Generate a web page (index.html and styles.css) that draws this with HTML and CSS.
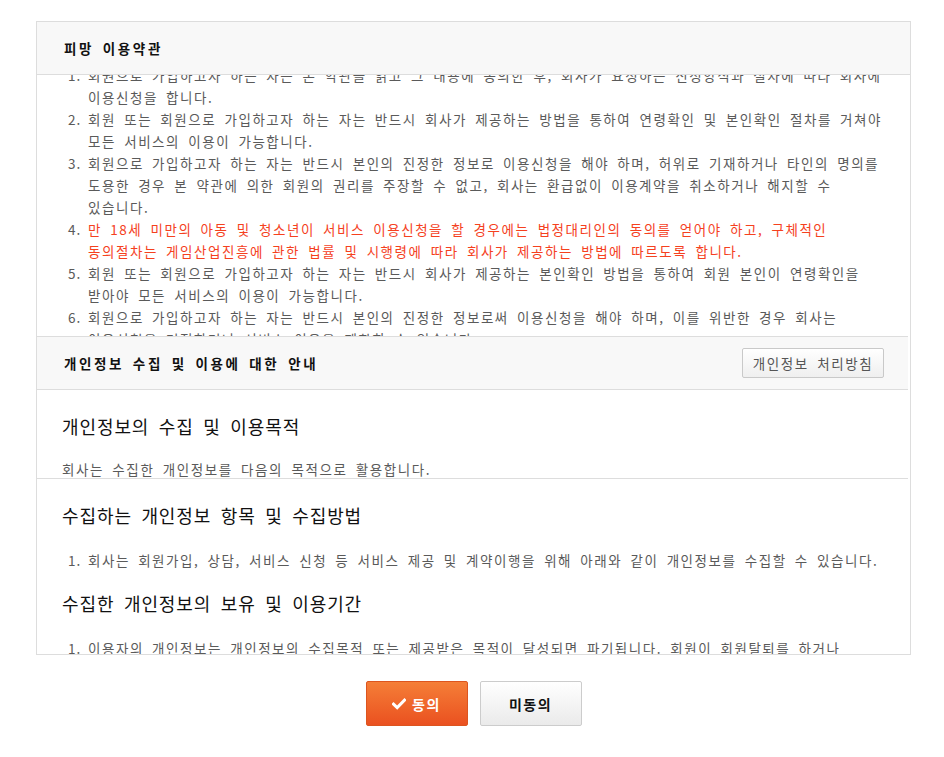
FILE: index.html
```html
<!DOCTYPE html>
<html lang="ko">
<head>
<meta charset="utf-8">
<title>피망 이용약관</title>
<link rel="stylesheet" href="styles.css">
</head>
<body>
<div class="page">
  <div class="terms">
    <div class="head">
      <h2 class="head-title">피망 이용약관</h2>
    </div>
    <div class="scroll-terms">
      <ol class="list list-terms">
        <li><span>회원으로 가입하고자 하는 자는 본 약관을 읽고 그 내용에 동의한 후, 회사가 요청하는 신청양식과 절차에 따라 회사에<br>이용신청을 합니다.</span></li>
        <li><span>회원 또는 회원으로 가입하고자 하는 자는 반드시 회사가 제공하는 방법을 통하여 연령확인 및 본인확인 절차를 거쳐야<br>모든 서비스의 이용이 가능합니다.</span></li>
        <li><span>회원으로 가입하고자 하는 자는 반드시 본인의 진정한 정보로 이용신청을 해야 하며, 허위로 기재하거나 타인의 명의를<br>도용한 경우 본 약관에 의한 회원의 권리를 주장할 수 없고, 회사는 환급없이 이용계약을 취소하거나 해지할 수<br>있습니다.</span></li>
        <li><span class="warn">만 18세 미만의 아동 및 청소년이 서비스 이용신청을 할 경우에는 법정대리인의 동의를 얻어야 하고, 구체적인<br>동의절차는 게임산업진흥에 관한 법률 및 시행령에 따라 회사가 제공하는 방법에 따르도록 합니다.</span></li>
        <li><span>회원 또는 회원으로 가입하고자 하는 자는 반드시 회사가 제공하는 본인확인 방법을 통하여 회원 본인이 연령확인을<br>받아야 모든 서비스의 이용이 가능합니다.</span></li>
        <li><span>회원으로 가입하고자 하는 자는 반드시 본인의 진정한 정보로써 이용신청을 해야 하며, 이를 위반한 경우 회사는<br>이용신청을 거절하거나 서비스 이용을 제한할 수 있습니다.</span></li>
      </ol>
    </div>
    <div class="head head-privacy">
      <h2 class="head-title">개인정보 수집 및 이용에 대한 안내</h2>
      <button class="btn-policy" type="button">개인정보 처리방침</button>
    </div>
    <div class="privacy">
      <section class="block block-purpose">
        <h3 class="block-title">개인정보의 수집 및 이용목적</h3>
        <p class="block-text">회사는 수집한 개인정보를 다음의 목적으로 활용합니다.</p>
      </section>
      <section class="block block-items">
        <h3 class="block-title">수집하는 개인정보 항목 및 수집방법</h3>
        <ol class="list list-block">
          <li><span>회사는 회원가입, 상담, 서비스 신청 등 서비스 제공 및 계약이행을 위해 아래와 같이 개인정보를 수집할 수 있습니다.</span></li>
        </ol>
        <h3 class="block-title">수집한 개인정보의 보유 및 이용기간</h3>
        <ol class="list list-block">
          <li><span>이용자의 개인정보는 개인정보의 수집목적 또는 제공받은 목적이 달성되면 파기됩니다. 회원이 회원탈퇴를 하거나</span></li>
        </ol>
      </section>
    </div>
  </div>
  <div class="actions">
    <button class="btn btn-agree" type="button"><svg class="check" width="14" height="12" viewBox="0 0 14 12"><polyline points="1.5,6 5.2,9.6 12.5,2.2" fill="none" stroke="#fff" stroke-width="3" stroke-linecap="square"/></svg>동의</button>
    <button class="btn btn-disagree" type="button">미동의</button>
  </div>
</div>
</body>
</html>
```

FILE: styles.css
```css
* { box-sizing: border-box; }

body {
  margin: 0;
  background: #fff;
  font-family: "Noto Sans CJK KR", "Noto Sans", sans-serif;
}

.page {
  padding: 21px 0 0 36px;
}

.terms {
  width: 875px;
  height: 634px;
  border: 1px solid #ddd;
  display: flex;
  flex-direction: column;
  overflow: hidden;
}

.head {
  flex: none;
  height: 53px;
  background: #f8f8f8;
  border-bottom: 1px solid #ddd;
  display: flex;
  align-items: center;
  justify-content: space-between;
  padding: 0 24px 0 27px;
}

.head-privacy {
  margin-right: 2px;
}

.head-title {
  margin: 0;
  font-size: 13.5px;
  font-weight: 700;
  line-height: 20px;
  color: #111;
  letter-spacing: 2.6px;
  word-spacing: 2.4px;
}

.btn-policy {
  width: 142px;
  height: 30px;
  padding: 0;
  border: 1px solid #c9c9c9;
  border-radius: 2px;
  background: linear-gradient(#ffffff, #efefef);
  font-family: inherit;
  font-size: 13.5px;
  color: #555;
  letter-spacing: 1.6px;
  word-spacing: 2.9px;
}

.scroll-terms {
  flex: none;
  height: 262px;
  margin-right: 2px;
  border-bottom: 1px solid #ddd;
  overflow: hidden;
}

.list {
  list-style: none;
  margin: 0;
  padding: 0 0 0 31px;
  counter-reset: item;
  font-size: 13.5px;
  line-height: 22px;
  color: #5a5a5a;
  letter-spacing: 1.55px;
  word-spacing: 2.9px;
  white-space: nowrap;
}

.list li {
  counter-increment: item;
  display: grid;
  grid-template-columns: 20px auto;
}

.list li::before {
  content: counter(item) ".";
  letter-spacing: 1px;
}

.list-terms {
  margin-top: -11px;
}

.warn {
  color: #f5411e;
}

.privacy {
  flex: 1;
  min-height: 0;
  margin-right: 2px;
  display: flex;
  flex-direction: column;
}

.block {
  overflow: hidden;
  padding: 21px 0 0 25px;
}

.block-purpose {
  flex: none;
  height: 89px;
  border-bottom: 1px solid #ddd;
}

.block-items {
  flex: 1;
  min-height: 0;
}

.block-title {
  margin: 0 0 17px;
  font-size: 18px;
  font-weight: 400;
  line-height: 30px;
  color: #111;
  letter-spacing: 0.9px;
  word-spacing: 3.6px;
}

.block-text {
  margin: 0;
  font-size: 13.5px;
  line-height: 22px;
  color: #5a5a5a;
  letter-spacing: 1.6px;
  word-spacing: 2.9px;
  white-space: nowrap;
}

.list-block {
  padding-left: 6px;
  margin: 19px 0 17px;
}

.actions {
  width: 875px;
  margin-top: 26px;
  display: flex;
  justify-content: center;
  gap: 12px;
}

.btn {
  width: 102px;
  height: 45px;
  padding: 0;
  border-radius: 2px;
  font-family: inherit;
  font-size: 14px;
  font-weight: 700;
  letter-spacing: 1.5px;
  display: inline-flex;
  align-items: center;
  justify-content: center;
  gap: 6px;
}

.btn-agree {
  color: #fff;
  border: 1px solid #dc551f;
  background: linear-gradient(#f57e37, #ea5120);
}

.btn-disagree {
  color: #111;
  border: 1px solid #cccccc;
  background: linear-gradient(#ffffff, #eaeaea);
}

.check {
  display: block;
}
```
